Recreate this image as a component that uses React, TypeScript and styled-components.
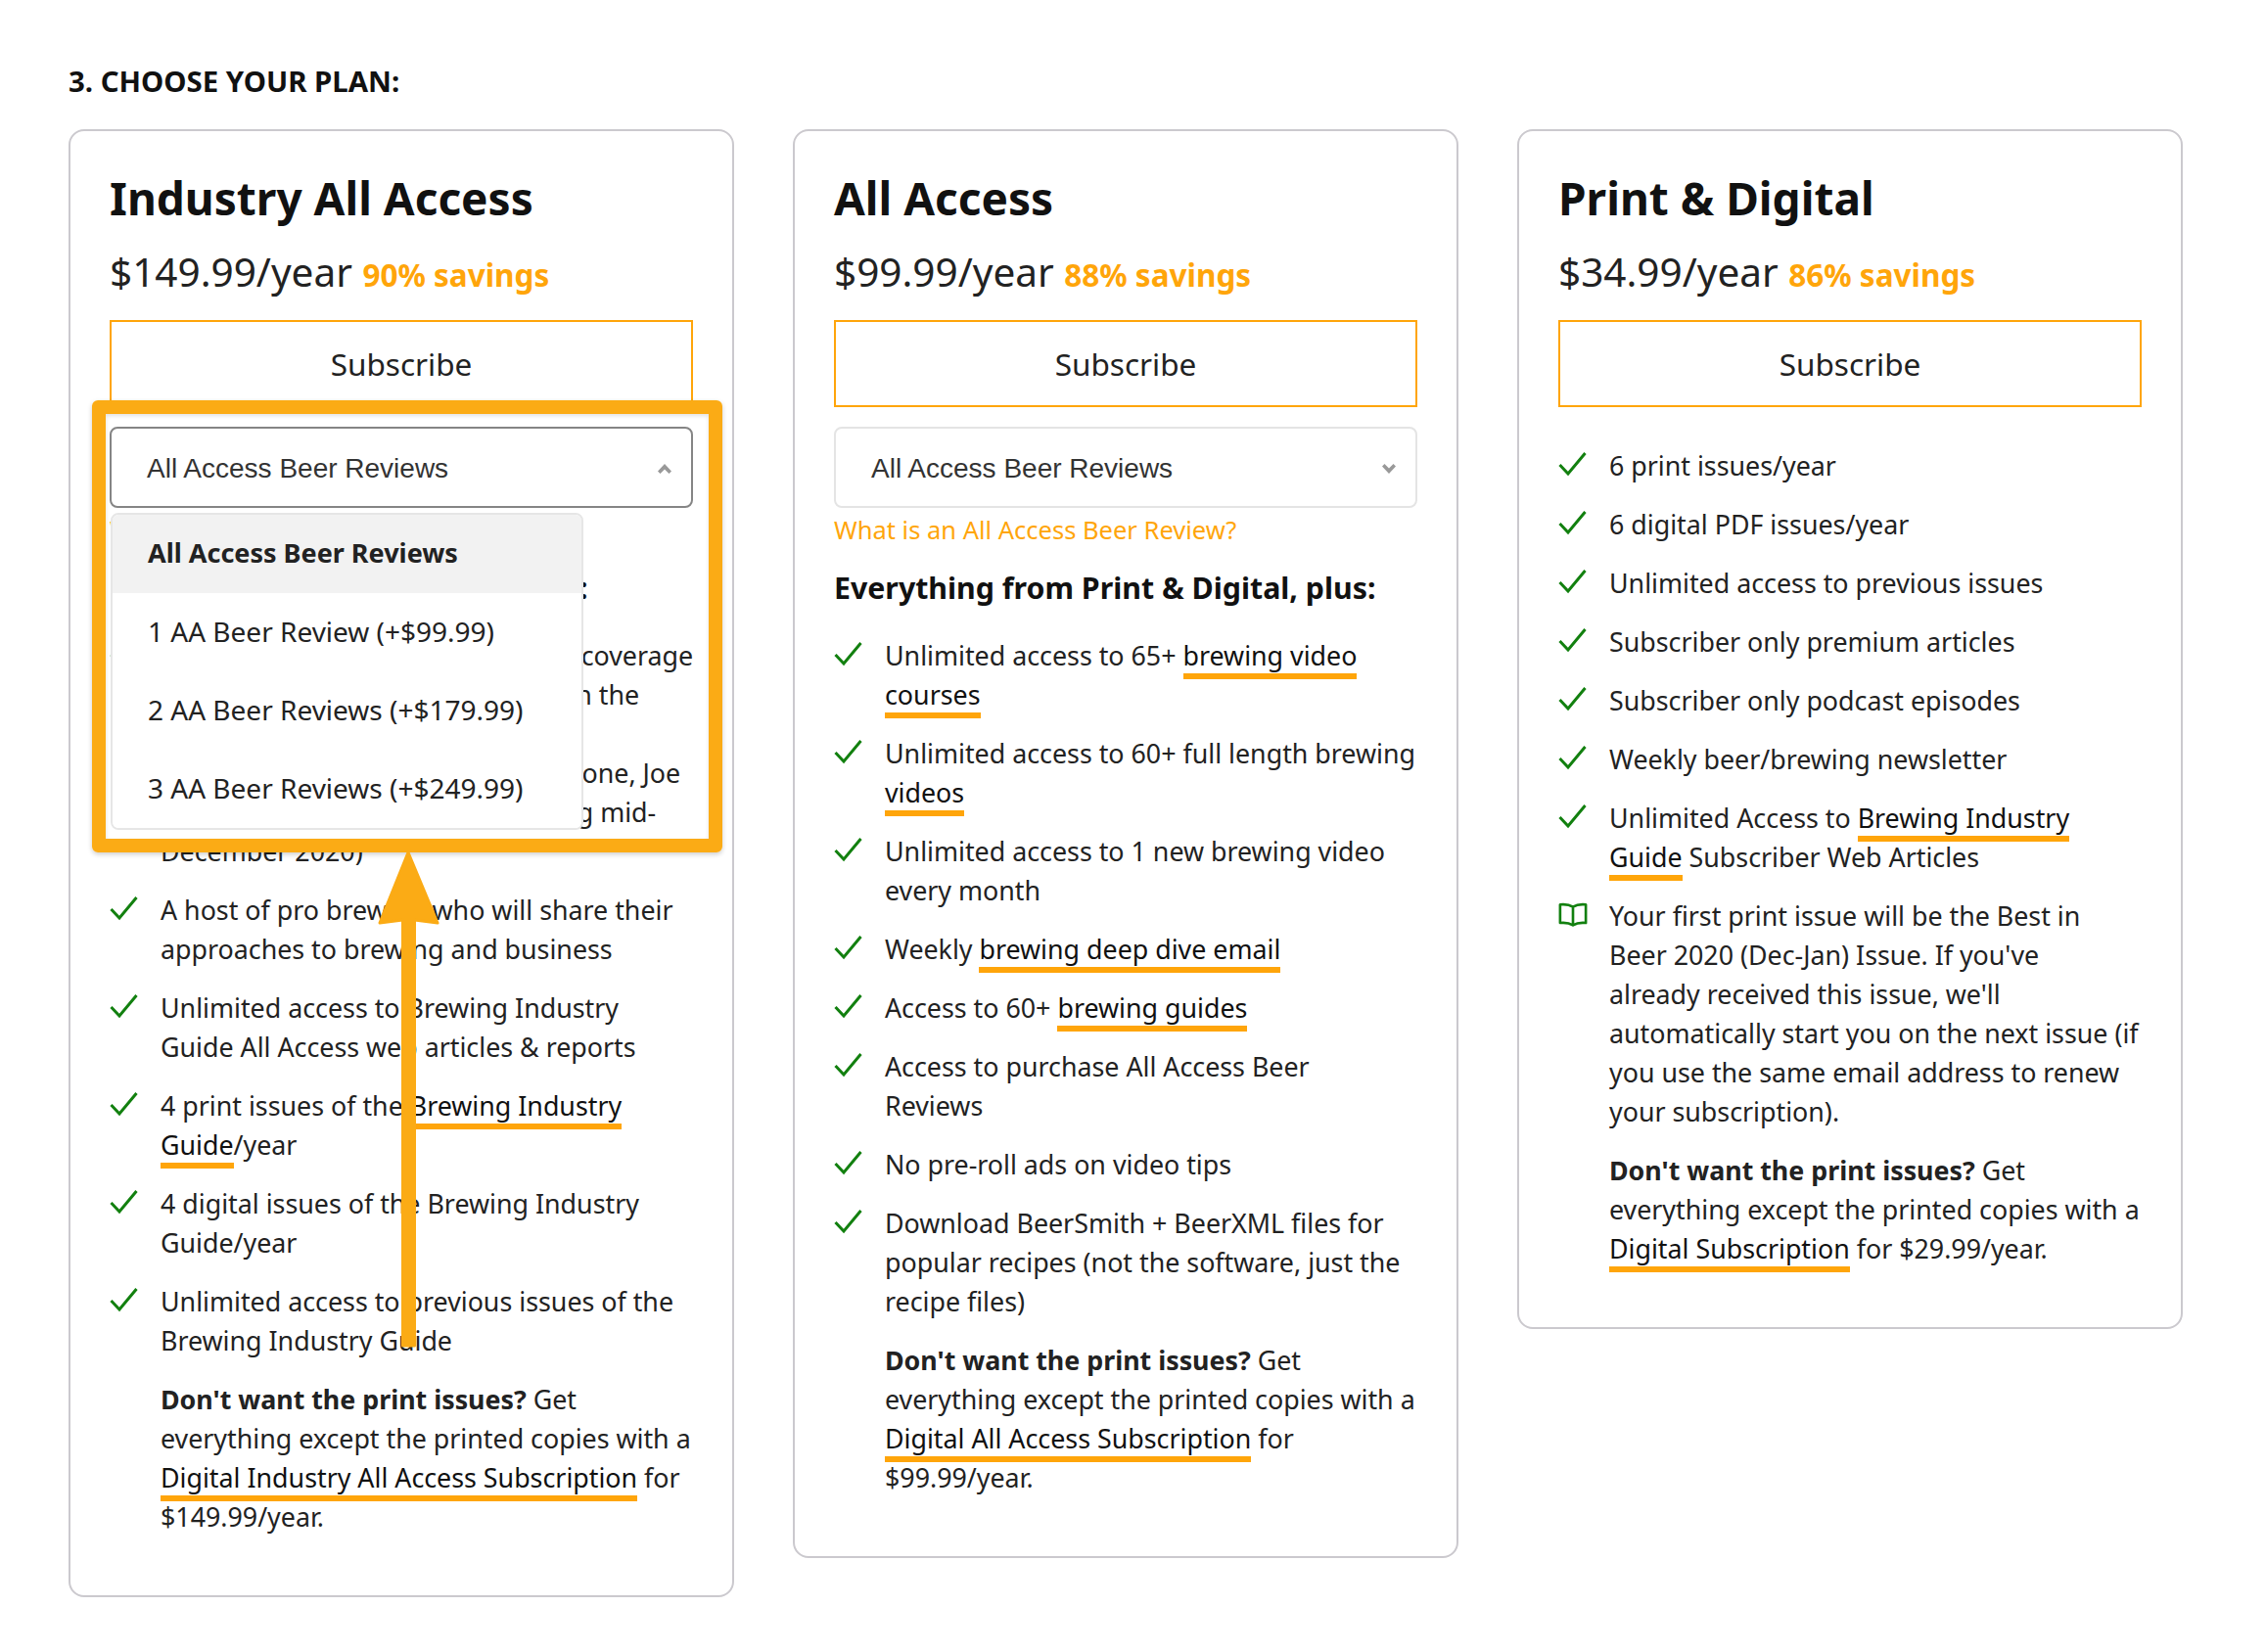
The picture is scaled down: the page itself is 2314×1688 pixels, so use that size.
import React from 'react';
import styled, { createGlobalStyle } from 'styled-components';

const orange = '#ffa50a';
const marker = '#fbab15';

const GlobalStyle = createGlobalStyle`
  html, body {
    margin: 0;
    padding: 0;
    background: #fff;
  }
  body {
    font-family: "Noto Sans", "Open Sans", sans-serif;
    color: #222;
  }
`;

const Page = styled.div`
  padding: 66px 84px 56px 70px;
`;

const PageTitle = styled.h3`
  margin: 0;
  font-size: 29.4px;
  line-height: 34px;
  font-weight: 700;
  color: #111;
`;

const Plans = styled.div`
  display: grid;
  grid-template-columns: repeat(3, 680px);
  column-gap: 60px;
  align-items: start;
  margin-top: 32px;
`;

const Card = styled.section`
  position: relative;
  box-sizing: border-box;
  padding: 38px 40px 60px;
  border: 2px solid #cbc9ce;
  border-radius: 16px;
  background: #fff;
`;

const PlanName = styled.h2`
  margin: 0;
  font-size: 46px;
  line-height: 60px;
  font-weight: 700;
  color: #111;
  white-space: nowrap;
`;

const Price = styled.div`
  margin-top: 21px;
  font-size: 40.5px;
  line-height: 50px;
  white-space: nowrap;
`;

const Savings = styled.span`
  font-size: 31.5px;
  font-weight: 700;
  color: ${orange};
`;

const SubscribeButton = styled.button`
  display: block;
  box-sizing: border-box;
  width: 596px;
  height: 89px;
  margin-top: 21px;
  border: 2px solid ${orange};
  background: #fff;
  color: #222;
  font-family: inherit;
  font-size: 31.5px;
`;

const SelectWrap = styled.div`
  position: relative;
  width: 596px;
  margin-top: 20px;
`;

const SelectBox = styled.div<{ $open?: boolean }>`
  display: flex;
  align-items: center;
  justify-content: space-between;
  box-sizing: border-box;
  height: 83px;
  padding: 2px 20px 0 36px;
  border: 2px solid ${p => (p.$open ? '#858585' : '#e4e4e4')};
  border-radius: 8px;
  font-family: "Liberation Sans", Arial, sans-serif;
  font-size: 28px;
  color: #333;
`;

const Chevron = styled.svg<{ $up?: boolean }>`
  width: 14px;
  height: 10px;
  fill: #999;
  transform: ${p => (p.$up ? 'rotate(180deg)' : 'none')};
`;

const Menu = styled.div`
  position: absolute;
  z-index: 2;
  top: 88px;
  left: 1px;
  box-sizing: border-box;
  width: 483px;
  border: 2px solid #e6e6e6;
  border-radius: 8px;
  background: #fff;
  overflow: hidden;
`;

const MenuItem = styled.div<{ $selected?: boolean }>`
  height: 80px;
  padding: 0 36px;
  line-height: 78px;
  font-size: ${p => (p.$selected ? 27 : 28)}px;
  white-space: nowrap;
  font-weight: ${p => (p.$selected ? 700 : 400)};
  background: ${p => (p.$selected ? '#f2f2f2' : '#fff')};
`;

const HelpLink = styled.div`
  margin-top: 3px;
  font-size: 25.5px;
  line-height: 38px;
  color: ${orange};
  white-space: nowrap;
`;

const ListHeading = styled.div`
  margin-top: 19px;
  font-size: 30.3px;
  line-height: 44px;
  font-weight: 700;
  color: #111;
  white-space: nowrap;
`;

const Features = styled.ul<{ $first?: boolean }>`
  margin: ${p => (p.$first ? '40px' : '27px')} 0 0;
  padding: 0;
  list-style: none;
`;

const Feature = styled.li`
  display: flex;
  margin-bottom: 20px;
`;

const IconSlot = styled.span`
  flex: 0 0 52px;
  box-sizing: border-box;
  height: 40px;
  padding-top: 5px;
  color: #12800f;
`;

const FeatureText = styled.div`
  font-size: 26.8px;
  line-height: 40px;
  white-space: nowrap;
`;

const Note = styled(FeatureText)`
  margin-left: 52px;
`;

const TextLink = styled.a`
  color: #111;
  border-bottom: 6px solid ${orange};
`;

const Highlight = styled.div`
  position: absolute;
  z-index: 3;
  top: 275px;
  left: 22px;
  box-sizing: border-box;
  width: 644px;
  height: 462px;
  border: 14px solid ${marker};
  border-radius: 6px;
  box-shadow: 0 2px 5px rgba(0, 0, 0, 0.2), inset 0 2px 4px rgba(0, 0, 0, 0.12);
`;

const Arrow = styled.svg`
  position: absolute;
  z-index: 3;
  top: 733px;
  left: 312px;
  width: 70px;
  height: 510px;
`;

const Check = () => (
  <svg width="30" height="26" viewBox="0 0 30 26" fill="none" stroke="currentColor" strokeWidth="3">
    <path d="M1.5 14 L10 23 L27.5 2" />
  </svg>
);

const Book = () => (
  <svg width="30" height="30" viewBox="0 0 32 32" fill="none" stroke="currentColor" strokeWidth="2.8" strokeLinejoin="round">
    <path d="M16 6 C12 3.5 7 3 2 3.5 V23.5 C7 23 12 23.5 16 26 C20 23.5 25 23 30 23.5 V3.5 C25 3 20 3.5 16 6 Z M16 6 V26" />
  </svg>
);

const ChevronDown = ({ up }: { up?: boolean }) => (
  <Chevron $up={up} viewBox="0 0 14 10">
    <path d="M0 2.5 L2.5 0 L7 4.5 L11.5 0 L14 2.5 L7 10 Z" />
  </Chevron>
);

const Item = ({ icon, children }: { icon?: React.ReactNode; children: React.ReactNode }) => (
  <Feature>
    <IconSlot>{icon || <Check />}</IconSlot>
    <FeatureText>{children}</FeatureText>
  </Feature>
);

const App: React.FC = () => (
  <Page>
    <GlobalStyle />
    <PageTitle>3. CHOOSE YOUR PLAN:</PageTitle>
    <Plans>
      <Card>
        <PlanName>Industry All Access</PlanName>
        <Price>$149.99/year <Savings>90% savings</Savings></Price>
        <SubscribeButton>Subscribe</SubscribeButton>
        <SelectWrap>
          <SelectBox $open>
            All Access Beer Reviews
            <ChevronDown up />
          </SelectBox>
          <Menu>
            <MenuItem $selected>All Access Beer Reviews</MenuItem>
            <MenuItem>1 AA Beer Review (+$99.99)</MenuItem>
            <MenuItem>2 AA Beer Reviews (+$179.99)</MenuItem>
            <MenuItem>3 AA Beer Reviews (+$249.99)</MenuItem>
          </Menu>
        </SelectWrap>
        <HelpLink>What is an All Access Beer Review?</HelpLink>
        <ListHeading>Everything from All Access, plus:</ListHeading>
        <Features>
          <Item>
            Access to all of our industry event coverage<br />
            of new craft beer trends, as seen in the<br />
            brewery floor, with<br />
            with pro brewers such as John Malone, Joe<br />
            Stange and so many more, starting mid-<br />
            December 2020)
          </Item>
          <Item>A host of pro brewers who will share their<br />approaches to brewing and business</Item>
          <Item>Unlimited access to Brewing Industry<br />Guide All Access web articles &amp; reports</Item>
          <Item>4 print issues of the <TextLink>Brewing Industry<br />Guide</TextLink>/year</Item>
          <Item>4 digital issues of the Brewing Industry<br />Guide/year</Item>
          <Item>Unlimited access to previous issues of the<br />Brewing Industry Guide</Item>
        </Features>
        <Note>
          <b>Don't want the print issues?</b> Get<br />
          everything except the printed copies with a<br />
          <TextLink>Digital Industry All Access Subscription</TextLink> for<br />
          $149.99/year.
        </Note>
        <Highlight />
        <Arrow viewBox="0 0 70 510">
          <path d="M33 4 L63 76 L39.5 73 V508 H27.5 V73 L4 76 Z" fill={marker} stroke={marker} strokeWidth="3" strokeLinejoin="round" />
        </Arrow>
      </Card>

      <Card>
        <PlanName>All Access</PlanName>
        <Price>$99.99/year <Savings>88% savings</Savings></Price>
        <SubscribeButton>Subscribe</SubscribeButton>
        <SelectWrap>
          <SelectBox>
            All Access Beer Reviews
            <ChevronDown />
          </SelectBox>
        </SelectWrap>
        <HelpLink>What is an All Access Beer Review?</HelpLink>
        <ListHeading>Everything from Print &amp; Digital, plus:</ListHeading>
        <Features>
          <Item>Unlimited access to 65+ <TextLink>brewing video<br />courses</TextLink></Item>
          <Item>Unlimited access to 60+ full length brewing<br /><TextLink>videos</TextLink></Item>
          <Item>Unlimited access to 1 new brewing video<br />every month</Item>
          <Item>Weekly <TextLink>brewing deep dive email</TextLink></Item>
          <Item>Access to 60+ <TextLink>brewing guides</TextLink></Item>
          <Item>Access to purchase All Access Beer<br />Reviews</Item>
          <Item>No pre-roll ads on video tips</Item>
          <Item>Download BeerSmith + BeerXML files for<br />popular recipes (not the software, just the<br />recipe files)</Item>
        </Features>
        <Note>
          <b>Don't want the print issues?</b> Get<br />
          everything except the printed copies with a<br />
          <TextLink>Digital All Access Subscription</TextLink> for<br />
          $99.99/year.
        </Note>
      </Card>

      <Card>
        <PlanName>Print &amp; Digital</PlanName>
        <Price>$34.99/year <Savings>86% savings</Savings></Price>
        <SubscribeButton>Subscribe</SubscribeButton>
        <Features $first>
          <Item>6 print issues/year</Item>
          <Item>6 digital PDF issues/year</Item>
          <Item>Unlimited access to previous issues</Item>
          <Item>Subscriber only premium articles</Item>
          <Item>Subscriber only podcast episodes</Item>
          <Item>Weekly beer/brewing newsletter</Item>
          <Item>Unlimited Access to <TextLink>Brewing Industry<br />Guide</TextLink> Subscriber Web Articles</Item>
          <Item icon={<Book />}>
            Your first print issue will be the Best in<br />
            Beer 2020 (Dec-Jan) Issue. If you've<br />
            already received this issue, we'll<br />
            automatically start you on the next issue (if<br />
            you use the same email address to renew<br />
            your subscription).
          </Item>
        </Features>
        <Note>
          <b>Don't want the print issues?</b> Get<br />
          everything except the printed copies with a<br />
          <TextLink>Digital Subscription</TextLink> for $29.99/year.
        </Note>
      </Card>
    </Plans>
  </Page>
);

export default App;
